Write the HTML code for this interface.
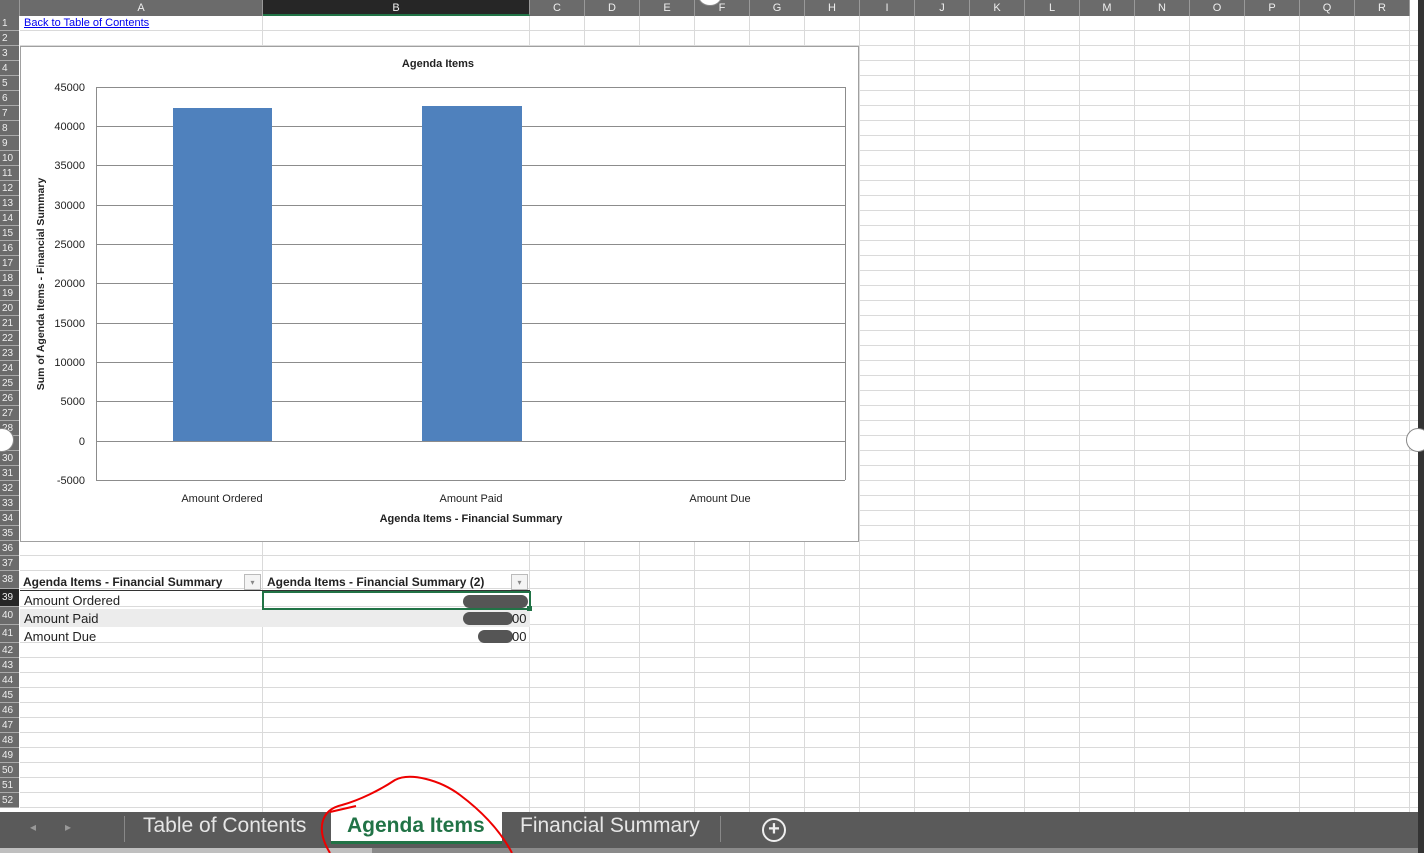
<!DOCTYPE html>
<html><head><meta charset="utf-8">
<style>
*{margin:0;padding:0;box-sizing:border-box}
body{width:1424px;height:853px;overflow:hidden;background:#fff;font-family:"Liberation Sans",sans-serif;position:relative}
.a{position:absolute}
.ch{position:absolute;top:0;height:16px;background:#6b6b6b;color:#eee;font-size:11px;text-align:center;line-height:17px;border-right:1px solid #999}
.rh{position:absolute;left:0;width:19px;background:#6b6b6b;color:#eee;font-size:10px;line-height:15px;padding-left:2px;border-bottom:1px solid #aaa;font-family:"Liberation Sans Narrow","Liberation Sans",sans-serif}
.vl{position:absolute;top:16px;height:796px;width:1px;background:#dadada}
.hl{position:absolute;left:20px;width:1398px;height:1px;background:#dadada}
.t{font-size:11px;color:#222}
</style></head><body>
<div id="g"></div>
<div class="a" style="left:1418px;top:0;width:6px;height:853px;background:#333"></div>
<div class="a" style="left:24px;top:17px;font-size:11px;color:#00e;text-decoration:underline">Back to Table of Contents</div>

<div class="a" style="left:20px;top:46px;width:839px;height:496px;background:#fff;border:1px solid #a0a0a0"></div>
<svg class="a" style="left:0;top:0" width="1424" height="853">
<g stroke="#8c8c8c" stroke-width="1">
<line x1="96" y1="87.5" x2="845" y2="87.5"/><line x1="96" y1="126.5" x2="845" y2="126.5"/><line x1="96" y1="165.5" x2="845" y2="165.5"/><line x1="96" y1="205.5" x2="845" y2="205.5"/><line x1="96" y1="244.5" x2="845" y2="244.5"/><line x1="96" y1="283.5" x2="845" y2="283.5"/><line x1="96" y1="323.5" x2="845" y2="323.5"/><line x1="96" y1="362.5" x2="845" y2="362.5"/><line x1="96" y1="401.5" x2="845" y2="401.5"/><line x1="96" y1="441.5" x2="845" y2="441.5"/><line x1="96" y1="480.5" x2="845" y2="480.5"/>
<line x1="96.5" y1="87" x2="96.5" y2="480"/><line x1="845.5" y1="87" x2="845.5" y2="480"/>
</g>
<rect x="173" y="108" width="99" height="333" fill="#4f81bd"/>
<rect x="422" y="106" width="100" height="335" fill="#4f81bd"/>
<g font-family="Liberation Sans" font-size="11" fill="#222" text-anchor="end">
<text x="85" y="91">45000</text><text x="85" y="130">40000</text><text x="85" y="169">35000</text><text x="85" y="209">30000</text><text x="85" y="248">25000</text><text x="85" y="287">20000</text><text x="85" y="327">15000</text><text x="85" y="366">10000</text><text x="85" y="405">5000</text><text x="85" y="445">0</text><text x="85" y="484">-5000</text>
</g>
<g font-family="Liberation Sans" font-size="11" fill="#222" text-anchor="middle">
<text x="222" y="502">Amount Ordered</text><text x="471" y="502">Amount Paid</text><text x="720" y="502">Amount Due</text>
<text x="471" y="522" font-weight="bold">Agenda Items - Financial Summary</text>
<text x="438" y="67" font-weight="bold">Agenda Items</text>
<text transform="translate(44,284) rotate(-90)" font-weight="bold" font-size="10.5">Sum of Agenda Items - Financial Summary</text>
</g>
</svg>

<div class="a" style="left:20px;top:573px;width:510px;height:18px;border-bottom:1px solid #333"></div>
<div class="a t" style="left:23px;top:575px;font-weight:bold;font-size:12px">Agenda Items - Financial Summary</div>
<div class="a" style="left:244px;top:574px;width:17px;height:16px;border:1px solid #bbb;background:#f4f4f4;font-size:8px;color:#888;text-align:center;line-height:15px">▾</div>
<div class="a t" style="left:267px;top:575px;font-weight:bold;font-size:12px">Agenda Items - Financial Summary (2)</div>
<div class="a" style="left:511px;top:574px;width:17px;height:16px;border:1px solid #bbb;background:#f4f4f4;font-size:8px;color:#888;text-align:center;line-height:15px">▾</div>
<div class="a" style="left:20px;top:609px;width:510px;height:18px;background:#ececec"></div>
<div class="a t" style="left:24px;top:593px;font-size:13px">Amount Ordered</div>
<div class="a t" style="left:24px;top:611px;font-size:13px">Amount Paid</div>
<div class="a t" style="left:24px;top:629px;font-size:13px">Amount Due</div>
<div class="a" style="left:262px;top:591px;width:269px;height:19px;border:2px solid #217346"></div>
<div class="a" style="left:527px;top:606px;width:5px;height:5px;background:#217346"></div>
<div class="a" style="left:463px;top:595px;width:65px;height:13px;border-radius:7px;background:#555"></div>
<div class="a" style="left:463px;top:612px;width:50px;height:13px;border-radius:7px;background:#555"></div>
<div class="a t" style="left:512px;top:611px;font-size:13px">00</div>
<div class="a" style="left:478px;top:630px;width:35px;height:13px;border-radius:7px;background:#555"></div>
<div class="a t" style="left:512px;top:629px;font-size:13px">00</div>

<div class="a" style="left:0;top:812px;width:1418px;height:36px;background:#5a5a5a"></div>
<div class="a" style="left:0;top:848px;width:1418px;height:5px;background:#8a8a8a"></div>
<div class="a" style="left:0;top:848px;width:372px;height:5px;background:#bfbfbf"></div>
<div class="a" style="left:30px;top:820px;color:#999;font-size:12px">◂</div>
<div class="a" style="left:65px;top:820px;color:#999;font-size:12px">▸</div>
<div class="a" style="left:124px;top:816px;width:1px;height:26px;background:#888"></div>
<div class="a" style="left:143px;top:814px;color:#e6e6e6;font-size:21px">Table of Contents</div>
<div class="a" style="left:331px;top:812px;width:171px;height:32px;background:#fff;border-bottom:3px solid #217346"></div>
<div class="a" style="left:347px;top:814px;color:#217346;font-size:21px;font-weight:bold">Agenda Items</div>
<div class="a" style="left:520px;top:814px;color:#e6e6e6;font-size:21px">Financial Summary</div>
<div class="a" style="left:720px;top:816px;width:1px;height:26px;background:#888"></div>
<div class="a" style="left:762px;top:818px;width:24px;height:24px;border:2px solid #eee;border-radius:50%;color:#eee;text-align:center;font-size:20px;line-height:19px;font-weight:bold">+</div>

<svg class="a" style="left:0;top:0" width="1424" height="853">
<path d="M330 853 C316 830,320 810,342 805 C360 800,380 790,395 780 C410 772,440 780,460 795 C480 810,500 830,512 853" fill="none" stroke="#e00" stroke-width="2"/>
<path d="M330 812 L356 806" stroke="#e00" stroke-width="2"/>
</svg>

<div class="a" style="left:-10px;top:428px;width:24px;height:24px;border-radius:50%;background:#fff;border:1px solid #888"></div>
<div class="a" style="left:1406px;top:428px;width:24px;height:24px;border-radius:50%;background:#fff;border:1px solid #888"></div>
<div class="a" style="left:698px;top:-14px;width:24px;height:20px;border-radius:50%;background:#fff;border:1px solid #888"></div>

<script>
var g=document.getElementById('g'),h='';
var cx=[20,263,530,585,640,695,750,805,860,915,970,1025,1080,1135,1190,1245,1300,1355,1410,1418];
var L='ABCDEFGHIJKLMNOPQR';
for(var i=0;i<18;i++){
 h+='<div class="vl" style="left:'+(cx[i+1]-1)+'px"></div>';
 h+='<div class="ch" style="left:'+cx[i]+'px;width:'+(cx[i+1]-cx[i])+'px;'+(i==1?'background:#262626;border-bottom:2px solid #217346;':'')+'">'+L[i]+'</div>';
}
h+='<div class="ch" style="left:0;width:20px"></div>';
var y=16;
for(var r=1;r<=52;r++){
 var rh=(r>=38&&r<=41)?18:15;
 h+='<div class="hl" style="top:'+(y+rh-1)+'px"></div>';
 h+='<div class="rh" style="top:'+y+'px;height:'+rh+'px;line-height:'+rh+'px;'+(r==39?'background:#262626;':'')+'">'+r+'</div>';
 y+=rh;
}
g.innerHTML=h;
</script>
</body></html>
